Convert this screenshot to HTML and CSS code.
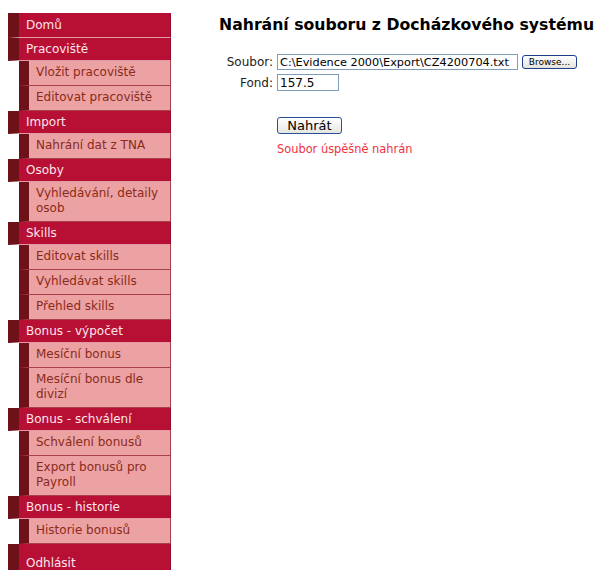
FILE: index.html
```html
<!DOCTYPE html>
<html lang="cs">
<head>
<meta charset="utf-8">
<title>Nahrání souboru z Docházkového systému</title>
<link rel="stylesheet" href="styles.css">
</head>
<body>
<div class="layout">
  <nav class="menu">
    <a class="head first" href="#">Domů</a>
    <a class="head" href="#">Pracoviště</a>
    <a class="sub" href="#">Vložit pracoviště</a>
    <a class="sub" href="#">Editovat pracoviště</a>
    <a class="head" href="#">Import</a>
    <a class="sub" href="#">Nahrání dat z TNA</a>
    <a class="head" href="#">Osoby</a>
    <a class="sub" href="#">Vyhledávání, detaily osob</a>
    <a class="head" href="#">Skills</a>
    <a class="sub" href="#">Editovat skills</a>
    <a class="sub" href="#">Vyhledávat skills</a>
    <a class="sub" href="#">Přehled skills</a>
    <a class="head" href="#">Bonus - výpočet</a>
    <a class="sub" href="#">Mesíční bonus</a>
    <a class="sub" href="#">Mesíční bonus dle divizí</a>
    <a class="head" href="#">Bonus - schválení</a>
    <a class="sub" href="#">Schválení bonusů</a>
    <a class="sub" href="#">Export bonusů pro Payroll</a>
    <a class="head" href="#">Bonus - historie</a>
    <a class="sub" href="#">Historie bonusů</a>
    <a class="head logout" href="#">Odhlásit</a>
  </nav>
  <main class="content">
    <h1 class="title">Nahrání souboru z Docházkového systému</h1>
    <form class="upload">
      <div class="row">
        <label class="lbl" for="soubor">Soubor:</label>
        <span class="file">
          <input class="field path" id="soubor" type="text" value="C:\Evidence 2000\Export\CZ4200704.txt">
          <button class="browse" type="button">Browse...</button>
        </span>
      </div>
      <div class="row">
        <label class="lbl" for="fond">Fond:</label>
        <input class="field fond" id="fond" type="text" value="157.5">
      </div>
      <div class="actions">
        <button class="submit" type="button">Nahrát</button>
        <p class="ok">Soubor úspěšně nahrán</p>
      </div>
    </form>
  </main>
</div>
</body>
</html>
```

FILE: styles.css
```css
html, body {
  margin: 0;
  padding: 0;
  background: #ffffff;
}

body {
  padding: 13px 0 0 8px;
  font-family: "DejaVu Sans", Verdana, sans-serif;
  font-size: 12px;
}

.layout {
  display: grid;
  grid-template-columns: 163px 1fr;
  column-gap: 48px;
  align-items: start;
}

/* left navigation */
.menu {
  display: flex;
  flex-direction: column;
}

.menu a {
  display: block;
  text-decoration: none;
  line-height: 15px;
  box-sizing: border-box;
}

.menu .head {
  border-left: 11px solid #6e1219;
  border-right: 1px solid #8e0c2a;
  border-bottom: 1px solid #e39aa8;
  background: #b80f34;
  color: #fbe6ec;
  padding: 4px 4px 3px 7px;
  height: 23px;
}

.menu .first {
  height: 25px;
  padding-top: 5px;
}

.menu .sub {
  margin-left: 11px;
  border-left: 10px solid #6e1219;
  border-right: 1px solid #a8404a;
  border-bottom: 1px solid #a8404a;
  background: #eca2a2;
  color: #8a2a1c;
  padding: 4px 4px 5px 7px;
  min-height: 25px;
}

.menu .logout {
  padding-top: 12px;
  height: 40px;
  border-bottom: 0;
}

/* page content */
.content {
  padding-top: 2px;
}

.title {
  margin: 0 0 20px;
  font-size: 15.7px;
  font-weight: bold;
  color: #000;
  white-space: nowrap;
}

.upload {
  display: flex;
  flex-direction: column;
  gap: 4px;
  margin: 0;
}

.row {
  display: flex;
  align-items: center;
  gap: 4px;
}

.lbl {
  width: 54px;
  text-align: right;
  color: #222;
}

.file {
  display: flex;
  align-items: center;
  gap: 4px;
}

.field {
  font-family: inherit;
  font-size: 11.3px;
  height: 16px;
  box-sizing: border-box;
  border: 1px solid #7f9db9;
  padding: 0 2px;
  margin: 0;
  color: #000;
}

.path { width: 241px; }
.fond { width: 62px; height: 17px; font-size: 12px; }

.browse {
  font-family: "DejaVu Sans", sans-serif;
  font-size: 9px;
  width: 55px;
  height: 14px;
  padding: 0;
  border: 1px solid #1e3f8a;
  border-radius: 3px;
  background: linear-gradient(#ffffff, #e4e4dc);
  color: #000;
}

.actions {
  margin-top: 22px;
  padding-left: 58px;
}

.submit {
  font-family: inherit;
  font-size: 13px;
  width: 65px;
  height: 17px;
  line-height: 13px;
  padding: 0;
  border: 1px solid #2a4f9a;
  border-radius: 3px;
  background: linear-gradient(#ffffff, #e6e6e0);
  color: #000;
}

.ok {
  margin: 8px 0 0;
  color: #f2303f;
  font-size: 11.4px;
}
```
